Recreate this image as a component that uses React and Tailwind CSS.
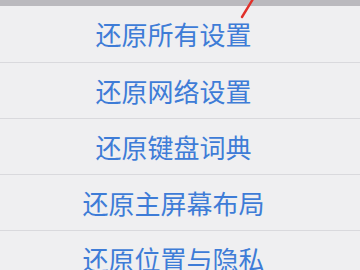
import React from 'react';

const items = ['还原所有设置', '还原网络设置', '还原键盘词典', '还原主屏幕布局', '还原位置与隐私'];

const App = () => {
  return (
    <div
      className="relative w-[360px] h-[270px] overflow-hidden bg-[#efeff1]"
      style={{ fontFamily: '"Noto Sans CJK SC", "Noto Sans", sans-serif' }}
    >
      {/* top grey strip */}
      <div className="h-[6px] bg-[#bab9be]" />

      {items.map((label, i) => (
        <div
          key={label}
          className={`flex h-[56px] items-center justify-center pr-[13px] ${i > 0 ? 'border-t border-[#d9d9dd]' : ''}`}
        >
          <span className="text-[26px] leading-none text-[#3e7cd7]">{label}</span>
        </div>
      ))}

      {/* red annotation arrow */}
      <svg className="absolute left-[236px] top-0" width="24" height="22" viewBox="0 0 24 22">
        <line x1="17" y1="-1" x2="6" y2="17" stroke="#e0302a" strokeWidth="2.4" strokeLinecap="round" />
      </svg>
    </div>
  );
};

export default App;
